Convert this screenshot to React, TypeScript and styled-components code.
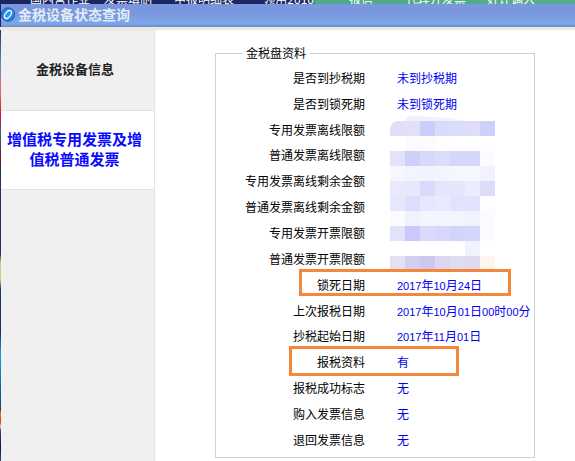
import React from "react";
import styled, { createGlobalStyle } from "styled-components";

const Global = createGlobalStyle`
  html, body { margin: 0; padding: 0; background: #fff; }
  body { font-family: "Noto Sans CJK SC", "Liberation Sans", sans-serif; }
  #root { width: 575px; height: 461px; overflow: hidden; }
`;

const Page = styled.div`
  position: relative;
  width: 575px;
  height: 461px;
  overflow: hidden;
  display: flex;
  flex-direction: column;
`;

const BackStrip = styled.div`
  height: 4px;
  flex: none;
  display: flex;
  overflow: hidden;
  background: linear-gradient(90deg, #1a2560 0, #1d2a66 308px, #4fa98c 316px, #55ab8e 575px);
`;

const BackLabel = styled.span<{ $w: number }>`
  flex: none;
  width: ${(p) => p.$w}px;
  height: 4px;
  font-size: 12px;
  line-height: 11px;
  color: #fff;
  white-space: nowrap;
  display: flex;
  align-items: flex-end;
  justify-content: flex-end;
`;

const TitleBar = styled.div`
  height: 23px;
  flex: none;
  display: flex;
  align-items: center;
  gap: 3px;
  padding: 0 0 3px 0;
  box-sizing: border-box;
  border-left: 1px solid #1d2a66;
  background: linear-gradient(180deg, #7a97dd 0, #7896de 40%, #7ca6e6 75%, #7ca4e6 88%, #6f86d6 100%);
`;

const TitleText = styled.span`
  font-size: 14px;
  font-weight: 700;
  line-height: 20px;
  color: #e4ebf8;
`;

const Ledge = styled.div`
  height: 3px;
  flex: none;
  background: #ece9d8;
`;

const Body = styled.div`
  flex: 1;
  display: flex;
  min-height: 0;
`;

const Edge = styled.div`
  width: 1px;
  flex: none;
  background: linear-gradient(180deg, #26306a 0, #5b8fc0 8%, #e86a6a 14%, #d81020 20%, #2a60a0 24%, #7a1020 30%, #26306a 33%, #26306a 52%, #d8c880 54%, #d8c880 58%, #1d3a6a 60%, #1a2a70 70%, #10a0e0 75%, #1080c0 80%, #1d3a6a 88%, #f07010 89%, #f03010 91%, #d0d0d0 92%, #2a4a70 93%, #10105a 97%, #2a4a70 100%);
`;

const Sidebar = styled.div`
  width: 153px;
  flex: none;
  background: #f0f0f0;
  border-right: 1px solid #dfe3ea;
  box-sizing: content-box;
  display: flex;
  flex-direction: column;
`;

const NavItem = styled.div<{ $active?: boolean }>`
  height: 80px;
  flex: none;
  box-sizing: border-box;
  display: flex;
  align-items: center;
  justify-content: center;
  text-align: center;
  font-weight: 700;
  font-size: ${(p) => (p.$active ? 15 : 13)}px;
  line-height: ${(p) => (p.$active ? 20 : 18)}px;
  color: ${(p) => (p.$active ? "#0a0aff" : "#222")};
  background: ${(p) => (p.$active ? "#fff" : "transparent")};
  padding: ${(p) => (p.$active ? "0 9px 2px 3px" : "0 5px 2px 0")};
  border-top: ${(p) => (p.$active ? "1px solid #dfe3ea" : "none")};
  border-bottom: ${(p) => (p.$active ? "1px solid #dfe3ea" : "none")};
`;

const Main = styled.div`
  flex: 1;
  padding: 16px 0 0 60px;
  min-width: 0;
`;

const Field = styled.fieldset`
  width: 320px;
  height: 412px;
  box-sizing: border-box;
  margin: 0;
  padding: 4.5px 0 0;
  border: 1px solid #d0d0d0;
`;

const Legend = styled.legend`
  margin-left: 26px;
  padding: 0 4px 0 4px;
  font-size: 12px;
  line-height: 14px;
  color: #000;
`;

const Row = styled.div`
  display: grid;
  grid-template-columns: 149px 1fr;
  column-gap: 32px;
  height: 25.85px;
  align-items: center;
  font-size: 12px;
  white-space: nowrap;
`;

const Label = styled.span`
  text-align: right;
  color: #000;
`;

const Value = styled.span`
  color: #0000f0;
`;

const Num = styled.span`
  font-family: "Liberation Sans", sans-serif;
  font-size: 11px;
`;

const Mosaic = styled.svg`
  position: absolute;
  left: 365px;
  top: 105px;
`;

const Marker = styled.div<{ $x: number; $y: number; $w: number; $h: number }>`
  position: absolute;
  left: ${(p) => p.$x}px;
  top: ${(p) => p.$y}px;
  width: ${(p) => p.$w}px;
  height: ${(p) => p.$h}px;
  box-sizing: border-box;
  border: 3px solid #f5873c;
`;

const rows: [string, React.ReactNode][] = [
  ["是否到抄税期", "未到抄税期"],
  ["是否到锁死期", "未到锁死期"],
  ["专用发票离线限额", ""],
  ["普通发票离线限额", ""],
  ["专用发票离线剩余金额", ""],
  ["普通发票离线剩余金额", ""],
  ["专用发票开票限额", ""],
  ["普通发票开票限额", ""],
  ["锁死日期", <><Num>2017</Num>年<Num>10</Num>月<Num>24</Num>日</>],
  ["上次报税日期", <><Num>2017</Num>年<Num>10</Num>月<Num>01</Num>日<Num>00</Num>时<Num>00</Num>分</>],
  ["抄税起始日期", <><Num>2017</Num>年<Num>11</Num>月<Num>01</Num>日</>],
  ["报税资料", "有"],
  ["报税成功标志", "无"],
  ["购入发票信息", "无"],
  ["退回发票信息", "无"],
];

const mosaic: string[][] = [
  ["#dfdffa", "#e0e0fb", "#ccccfb", "#dadafc", "#dcdcfb", "#dedefb", "#cfcffb"],
  ["#ffffff", "#fbfbff", "#fbfbff", "#fefeff", "#ffffff", "#ffffff", "#ffffff"],
  ["#e2e2fb", "#cfcffc", "#d8d8fb", "#dcdcfc", "#d6d6fb", "#d6d6fb", "#fafaff"],
  ["#f6f7fe", "#f3f4fe", "#f2f3fd", "#f3f4fe", "#f6f7fe", "#f5f6fe", "#f1f2fd"],
  ["#e8e9fd", "#e7e8fd", "#d9dafb", "#e5e6fc", "#e5e6fc", "#ebecfd", "#dcddfb"],
  ["#e6e7fd", "#dddefd", "#e6e7fc", "#e9eafd", "#e1e2fc", "#e1e2fc", "#fdfdff"],
  ["#fcfcff", "#f2f2fe", "#f5f5fe", "#f4f4fe", "#f4f4fe", "#f2f2fe", "#fbfbff"],
  ["#e2e3fb", "#c9c9fb", "#dadbfb", "#d6d7fb", "#d3d4fb", "#d5d6fb", "#fbfbff"],
  ["#ffffff", "#ffffff", "#ffffff", "#ffffff", "#ffffff", "#f1f2fd", "#ffffff"],
  ["#e4e0f2", "#d3cdef", "#cfc8ee", "#dcd6f1", "#e0dcf2", "#dfdaf1", "#fdf5ee"],
];

export default function App() {
  return (
    <Page>
      <Global />
      <BackStrip>
        <BackLabel $w={90}>国内营作业</BackLabel>
        <BackLabel $w={62}>发票填制</BackLabel>
        <BackLabel $w={82}>申报明细表</BackLabel>
        <BackLabel $w={80}>领用2010</BackLabel>
        <BackLabel $w={59}>报信</BackLabel>
        <BackLabel $w={93}>代理开发票</BackLabel>
        <BackLabel $w={69}>好评调入</BackLabel>
      </BackStrip>
      <TitleBar>
        <svg width="14" height="15" viewBox="0 0 14 15">
          <circle cx="7" cy="7.5" r="6.7" fill="#1a86e0" stroke="#1b4f9c" strokeWidth="0.8" />
          <ellipse cx="7" cy="7.5" rx="2.6" ry="4.6" fill="#2a95e6" stroke="#eaf4ff" strokeWidth="1.5" transform="rotate(38 7 7.5)" />
        </svg>
        <TitleText>金税设备状态查询</TitleText>
      </TitleBar>
      <Ledge />
      <Body>
        <Edge />
        <Sidebar>
          <NavItem>金税设备信息</NavItem>
          <NavItem $active>增值税专用发票及增值税普通发票</NavItem>
        </Sidebar>
        <Main>
          <Field>
            <Legend>金税盘资料</Legend>
            {rows.map(([label, value]) => (
              <Row key={label as string}>
                <Label>{label}</Label>
                <Value>{value}</Value>
              </Row>
            ))}
          </Field>
        </Main>
      </Body>
      <Mosaic width="140" height="170" viewBox="0 0 140 170">
        <path d="M40 16 Q42 10 50 11 L85 13 L100 16 Z" fill="#f1f1fe" />
        {mosaic.map((row, r) =>
          row.map((c, i) => <rect key={`${r}-${i}`} x={25 + i * 15} y={16 + r * 15} width="15" height="15" fill={c} />)
        )}
        <path d="M25 16 L25 24 Q26 17 32 16 Z" fill="#fff" />
      </Mosaic>
      <Marker $x={299} $y={269} $w={212} $h={27} />
      <Marker $x={289} $y={346} $w={170} $h={30} />
    </Page>
  );
}
